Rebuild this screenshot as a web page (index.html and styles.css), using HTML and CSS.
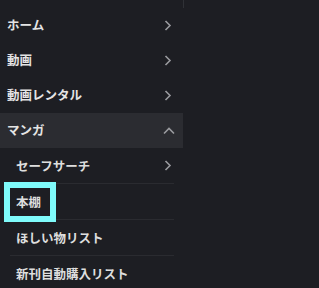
FILE: index.html
```html
<!DOCTYPE html>
<html lang="ja">

<head>
  <meta charset="UTF-8">
  <meta name="viewport" content="width=device-width, initial-scale=1.0">
  <title>メニュー</title>
  <link rel="stylesheet" href="styles.css">
</head>

<body>
  <nav class="menu">
    <div class="menu-top"></div>

    <a class="item" href="#">
      <span class="label">ホーム</span>
      <svg class="chev" width="8" height="11" viewBox="0 0 8 11"><path d="M1.5 1 L6 5.5 L1.5 10" /></svg>
    </a>
    <a class="item" href="#">
      <span class="label">動画</span>
      <svg class="chev" width="8" height="11" viewBox="0 0 8 11"><path d="M1.5 1 L6 5.5 L1.5 10" /></svg>
    </a>
    <a class="item" href="#">
      <span class="label">動画レンタル</span>
      <svg class="chev" width="8" height="11" viewBox="0 0 8 11"><path d="M1.5 1 L6 5.5 L1.5 10" /></svg>
    </a>
    <a class="item open" href="#">
      <span class="label">マンガ</span>
      <svg class="chev up" width="12" height="8" viewBox="0 0 12 8"><path d="M1 6.5 L6 1.5 L11 6.5" /></svg>
    </a>

    <div class="sub">
      <a class="sub-item" href="#">
        <span class="label">セーフサーチ</span>
        <svg class="chev" width="8" height="11" viewBox="0 0 8 11"><path d="M1.5 1 L6 5.5 L1.5 10" /></svg>
      </a>
      <a class="sub-item" href="#">
        <span class="label focus">本棚</span>
      </a>
      <a class="sub-item" href="#">
        <span class="label">ほしい物リスト</span>
      </a>
      <a class="sub-item" href="#">
        <span class="label">新刊自動購入リスト</span>
      </a>
    </div>
  </nav>
</body>

</html>
```

FILE: styles.css
```css
* {
  box-sizing: border-box;
}

body {
  margin: 0;
  background: #1d1e23;
  font-family: "Noto Sans CJK JP", "Noto Sans", sans-serif;
  font-weight: bold;
  font-size: 12.5px;
  color: #e4e4e4;
}

.menu {
  width: 183px;
}

.menu-top {
  height: 8px;
  width: 184px;
  border-right: 1px solid #2f3136;
}

.item {
  display: flex;
  align-items: center;
  justify-content: space-between;
  height: 35px;
  padding: 0 11px 0 7px;
  color: inherit;
  text-decoration: none;
}

.item .label {
  line-height: 16px;
  padding-bottom: 1px;
}

.item.open {
  background: #2b2c31;
  padding-right: 8px;
}

.chev {
  fill: none;
  stroke: #9a9b9f;
  stroke-width: 1.6;
}

.sub {
  margin: 0 9px 0 10px;
}

.sub-item {
  display: flex;
  align-items: center;
  justify-content: space-between;
  height: 36px;
  padding-right: 2px;
  border-bottom: 1px solid #2a2b30;
  color: #dedede;
  text-decoration: none;
}

.sub-item:last-child {
  border-bottom: none;
}

.sub-item .label {
  line-height: 16px;
  padding: 6px 9px 6px 6px;
}

.focus {
  outline: 6px solid #7ffbfb;
}
```
